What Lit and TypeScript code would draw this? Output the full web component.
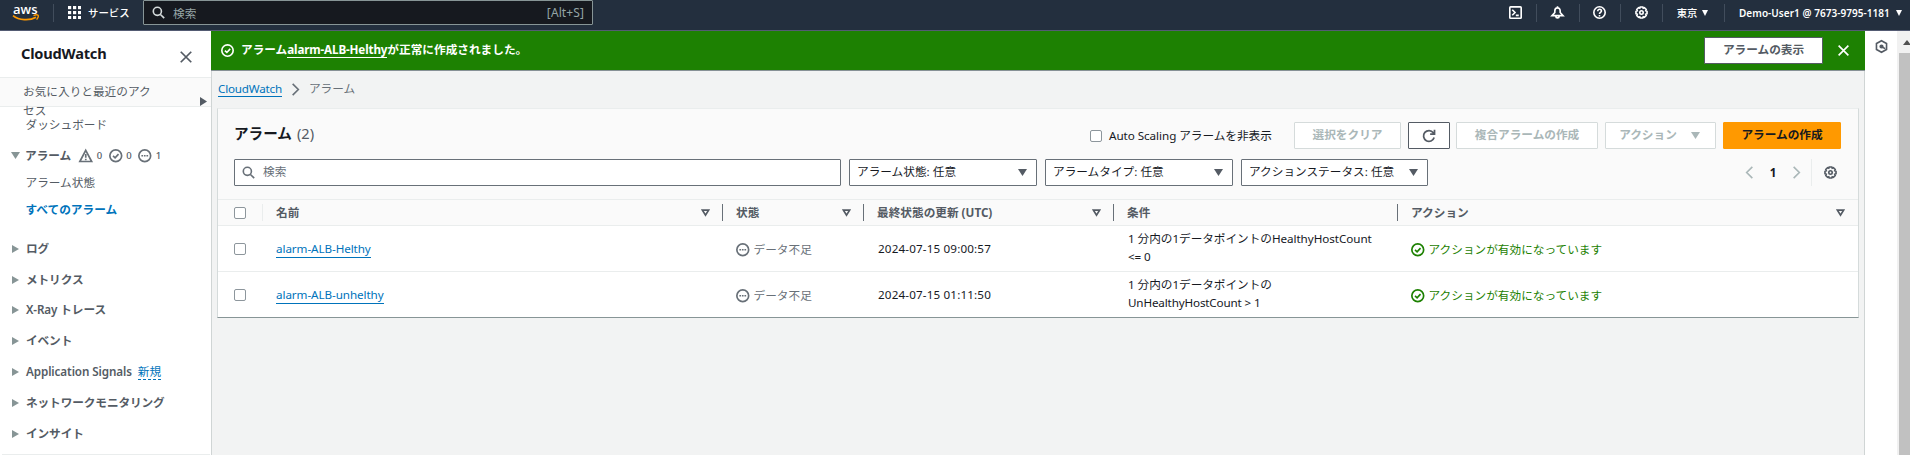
import { LitElement, html, css, svg, nothing } from "lit";
import { customElement, property } from "lit/decorators.js";

const ICONS: Record<string, unknown> = {
  search: svg`<circle cx="6.6" cy="6.6" r="5" /><path d="M10.4 10.4 15 15" />`,
  close: svg`<path d="M2 2 14 14M14 2 2 14" />`,
  check: svg`<circle cx="8" cy="8" r="7" /><path d="M4.8 8.2 7.2 10.4 11.3 6" />`,
  dots: svg`<circle cx="8" cy="8" r="7" /><path d="M4 8h2M7 8h2M10 8h2" />`,
  warn: svg`<path d="M8 1.6 15 14.8H1Z" /><path d="M8 6v4.4M8 11.6v1.8" />`,
  terminal: svg`<rect x="1" y="1" width="14" height="14" rx="1" /><path d="M4 4.6 7.4 8 4 11.4M8.4 11.6H12" />`,
  bell: svg`<path d="M8 .3v2M8 2.300C5.800 2.300 4.700 4 4.700 6V8L1.200 11.800H14.800L11.300 8V6C11.300 4 10.200 2.300 8 2.300ZM5.800 12.400c.3 3 4.100 3 4.400 0" />`,
  help: svg`<circle cx="8" cy="8" r="7" /><path d="M5.800 6.400c0-3.200 4.600-3 4.600-.2C10.400 8 8 7.800 8 9.800M8 11v1.800" />`,
  gear: svg`<path d="M6.400 1.200h3.200l.5 1.500 1.500-.6 2.200 2.200-.6 1.500 1.600.600v3.200l-1.600.600.600 1.500-2.200 2.200-1.500-.600-.5 1.500H6.400l-.5-1.500-1.500.600-2.200-2.200.600-1.500L1.200 9.600V6.400l1.600-.600-.600-1.500 2.200-2.200 1.500.600Z" /><circle cx="8" cy="8" r="2.100" />`,
  refresh: svg`<path d="M13.900 9.800A6.200 6.200 0 1 1 12.900 4.200L14.200 5.800M14.300 .8v5H9.300" />`,
  left: svg`<path d="M11.500 1 4.500 8l7 7" />`,
  right: svg`<path d="M4.500 1l7 7-7 7" />`,
  hexagon: svg`<path d="M8 .9 14.200 4.400v7.200L8 15.100 1.800 11.600V4.400Z" /><circle cx="8" cy="8" r="1.600" fill="currentColor" /><path d="M8.500 8.500 12.600 10.600" />`,
};

@customElement("ui-icon")
export class UiIcon extends LitElement {
  @property() name = "";
  @property({ type: Number }) size = 13;
  @property({ type: Number }) stroke = 2;
  static styles = css`
    :host { display: inline-flex; flex: none; }
    svg { display: block; fill: none; stroke: currentColor; overflow: visible; }
  `;
  render() {
    return html`<svg width=${this.size} height=${this.size} viewBox="0 0 16 16" stroke-width=${this.stroke}>${ICONS[this.name]}</svg>`;
  }
}

@customElement("ui-caret")
export class UiCaret extends LitElement {
  @property() dir = "down";
  @property({ type: Number }) w = 9;
  @property({ type: Number }) h = 7;
  static styles = css`
    :host { display: inline-flex; flex: none; }
    svg { display: block; }
    .solid { fill: currentColor; }
  `;
  render() {
    const d = this.dir === "right" ? "M0 0 100 50 0 100Z" : this.dir === "up" ? "M0 100 50 0 100 100Z" : "M0 0H100L50 100Z";
    return this.dir === "sort"
      ? html`<svg width="9" height="8" viewBox="0 0 9 8"><path d="M1.400 1.200H7.600L4.500 6.200Z" fill="none" stroke="currentColor" stroke-width="1.700" /></svg>`
      : html`<svg class="solid" width=${this.w} height=${this.h} viewBox="0 0 100 100" preserveAspectRatio="none"><path d=${d} /></svg>`;
  }
}

const base = css`
  * { box-sizing: border-box; }
`;

@customElement("top-nav")
export class TopNav extends LitElement {
  static styles = [base, css`
    :host { display: flex; height: 31px; background: #232f3e; border-bottom: 1px solid #545b73; color: #fff; font-size: 11px; }
    .brand { width: 30px; height: 26px; margin-left: 12px; }
    .word { display: block; height: 18px; font: 600 13px/18px "Open Sans", sans-serif; padding-left: 1px; }
    .smile { display: block; margin-top: -4px; }
    .rule { width: 1px; height: 18px; margin-top: 4px; background: #414d5c; flex: none; }
    .brand + .rule { margin-left: 11px; }
    .services { display: flex; align-items: center; height: 25px; margin-left: 14px; gap: 7px; font-size: 10.400px; font-weight: 500; width: 75px; white-space: nowrap; }
    .search { display: flex; align-items: center; width: 450px; height: 25px; background: #16191f; border: 1px solid #879596; border-radius: 1px; color: #95a5a6; font-size: 11.700px; padding: 0 8px; gap: 8px; }
    .search ui-icon { color: #d5dbdb; }
    .hint { margin-left: auto; font-size: 12px; letter-spacing: 0.1px; }
    .right { display: flex; margin-left: auto; height: 25px; }
    .cell { display: flex; align-items: center; justify-content: center; height: 25px; }
    .c0 { width: 41px; } .c1 { width: 42px; padding-right: 2px; } .c2 { width: 40px; padding-right: 1px; } .c3 { width: 41px; }
    .region { width: 61px; gap: 5px; font-size: 10.300px; font-weight: 500; padding-right: 2px; }
    .user { width: 185px; gap: 6px; font-size: 10px; font-weight: 600; justify-content: flex-start; padding-left: 14px; white-space: nowrap; letter-spacing: 0.04px; }
  `];
  render() {
    return html`
      <div class="brand">
        <span class="word">aws</span>
        <svg class="smile" width="28" height="8" viewBox="0 0 28 8">
          <path d="M1 1.600C7 6.400 17.500 7 24 3.200" fill="none" stroke="#ff9900" stroke-width="1.700" />
          <path d="M21.500 1.600c2-.9 4-.8 4.600-.3.500.9-.3 3-1.500 4.300" fill="none" stroke="#ff9900" stroke-width="1.400" />
        </svg>
      </div>
      <div class="rule"></div>
      <div class="services">
        <svg width="13" height="13" viewBox="0 0 13 13" fill="#fff">${[0, 5, 10].map((y) => [0, 5, 10].map((x) => svg`<rect x=${x} y=${y} width="3.200" height="3.200" />`))}</svg>
        <span>サービス</span>
      </div>
      <div class="search"><ui-icon name="search" size="13"></ui-icon><span>検索</span><span class="hint">[Alt+S]</span></div>
      <div class="right">
        <div class="cell c0"><ui-icon name="terminal"></ui-icon></div><div class="rule"></div>
        <div class="cell c1"><ui-icon name="bell"></ui-icon></div><div class="rule"></div>
        <div class="cell c2"><ui-icon name="help"></ui-icon></div><div class="rule"></div>
        <div class="cell c3"><ui-icon name="gear"></ui-icon></div><div class="rule"></div>
        <div class="cell region"><span>東京</span><ui-caret w="6" h="6"></ui-caret></div><div class="rule"></div>
        <div class="cell user"><span>Demo-User1 @ 7673-9795-1181</span><ui-caret w="6" h="6"></ui-caret></div>
      </div>`;
  }
}

@customElement("side-nav")
export class SideNav extends LitElement {
  static styles = [base, css`
    :host { display: block; width: 212px; background: #fff; border-right: 1px solid #d0d5d5; color: #545b64; }
    .head { display: flex; justify-content: space-between; height: 46px; padding: 10px 18px 0 21px; }
    .title { font-size: 14.600px; font-weight: 700; color: #16191f; line-height: 24px; letter-spacing: -0.2px; }
    .head ui-icon { margin-top: 9px; }
    .recent { display: flex; justify-content: space-between; height: 30px; background: #fafafa; border: solid #eaeded; border-width: 1px 0; padding: 4px 4px 0 23px; line-height: 19px; }
    .recent span { width: 134px; }
    .recent ui-caret { margin-top: 15px; }
    .row { display: flex; align-items: center; height: 27px; padding-left: 25.500px; white-space: nowrap; }
    .first { margin-top: 4px; }
    .group { padding-left: 10.500px; font-weight: 600; }
    .group ui-caret { color: #879596; width: 14.500px; }
    .alarms { margin-top: 4px; }
    .n { font-size: 9.500px; font-weight: 500; margin-left: 4px; width: 12px; }
    .alarms ui-icon { color: #687078; }
    .alarms ui-icon:first-of-type { margin-left: 8px; }
    .on { color: #0073bb; font-weight: 700; }
    .groups { margin-top: 10.500px; display: grid; grid-auto-rows: 30.800px; padding-bottom: 4.500px; border-bottom: 1px solid #eaeded; margin-inline: 2px 1px; }
    .groups .group { height: 30.800px; padding-left: 9.500px; }
    .lat { letter-spacing: -0.1px; }
    .new { color: #0073bb; font-weight: 400; border-bottom: 1px dashed #0073bb; margin-left: 6px; line-height: 15px; }
  `];
  render() {
    const groups = ["ログ", "メトリクス", "X-Ray トレース", "イベント", "Application Signals", "ネットワークモニタリング", "インサイト"];
    return html`
      <div class="head"><span class="title">CloudWatch</span><ui-icon name="close" size="14"></ui-icon></div>
      <div class="recent"><span>お気に入りと最近のアクセス</span><ui-caret dir="right" w="7" h="9"></ui-caret></div>
      <div class="row first">ダッシュボード</div>
      <div class="row group alarms"><ui-caret></ui-caret>アラーム
        <ui-icon name="warn" size="13.500"></ui-icon><span class="n">0</span>
        <ui-icon name="check" size="13.500"></ui-icon><span class="n">0</span>
        <ui-icon name="dots" size="13.500"></ui-icon><span class="n">1</span>
      </div>
      <div class="row">アラーム状態</div>
      <div class="row on">すべてのアラーム</div>
      <div class="groups">${groups.map((g) => html`<div class="row group"><ui-caret dir="right" w="7" h="8"></ui-caret><span class="lat">${g}</span>${g.startsWith("App") ? html`<span class="new">新規</span>` : nothing}</div>`)}</div>`;
  }
}

interface Alarm { name: string; updated: string; cond: [string, string]; }
const ALARMS: Alarm[] = [
  { name: "alarm-ALB-Helthy", updated: "2024-07-15 09:00:57", cond: ["1 分内の1データポイントのHealthyHostCount", "<= 0"] },
  { name: "alarm-ALB-unhelthy", updated: "2024-07-15 01:11:50", cond: ["1 分内の1データポイントの", "UnHealthyHostCount > 1"] },
];

@customElement("alarm-table")
export class AlarmTable extends LitElement {
  static styles = [base, css`
    :host { display: block; width: 1642px; height: 210px; margin-left: 5px; background: #fff; border: 1px solid #d5dbdb; border-top-color: #eaeded; border-bottom: 1px solid #879596; color: #16191f; }
    .top { background: #fafafa; height: 90px; padding: 13px 17px 0 16px; }
    .actions { display: flex; align-items: center; height: 27px; }
    h2 { margin: 0 auto 0 0; font-size: 14.600px; line-height: 24px; padding-bottom: 5px; }
    .count { font-weight: 400; color: #545b64; margin-left: 5px; }
    .box { display: block; width: 12px; height: 12px; border: 1px solid #8d969c; border-radius: 2px; background: #fff; flex: none; }
    .hide { display: flex; align-items: center; gap: 7px; margin-right: 22px; width: 182px; white-space: nowrap; letter-spacing: -0.05px; }
    .btn { display: flex; align-items: center; justify-content: center; height: 27px; border: 1px solid #d5dbdb; border-radius: 1px; background: #fff; color: #aab7b8; font-weight: 700; margin-left: 7px; white-space: nowrap; padding-bottom: 1px; }
    .clear { width: 107px; margin-left: 0; }
    .refresh { width: 42px; border-color: #545b64; color: #545b64; padding: 0; }
    .comp { width: 142px; margin-left: 6px; }
    .act { width: 111px; gap: 14px; padding-right: 2px; }
    .create { width: 118px; background: #ff9900; border-color: #ff9900; color: #16191f; }
    .filters { display: flex; margin-top: 10px; height: 27px; align-items: stretch; }
    .field { display: flex; align-items: center; background: #fff; border: 1px solid #687078; border-radius: 1px; margin-right: 8px; padding: 0 9px 1px 7px; justify-content: space-between; white-space: nowrap; }
    .field ui-caret { color: #545b64; margin-top: 1px; }
    .s { width: 607px; justify-content: flex-start; gap: 8px; color: #687078; }
    .s ui-icon { margin-top: 1px; }
    .f { width: 188px; } .f3 { width: 187px; margin: 0; }
    .pager { display: flex; align-items: center; margin-left: auto; color: #aab7b8; }
    .page { width: 34px; text-align: center; color: #16191f; font-weight: 700; }
    .pager i { width: 1px; height: 27px; background: #eaeded; margin: 0 12px 0 8px; }
    .gear { color: #545b64; margin-right: 4px; }
    .grid { display: grid; grid-template-columns: 45px 460px 141px 250px 284px 1fr; }
    .th { display: flex; align-items: center; height: 27px; background: #fafafa; border: solid #eaeded; border-width: 1px 0; color: #545b64; font-weight: 700; }
    .th span { flex: 1; padding-left: 13px; }
    .th i { width: 1px; height: 17px; background: #687078; margin-left: 12px; }
    .th i.soft { background: #eaeded; margin-left: auto; }
    .th .box, .td .box { margin-left: 16px; }
    .th ui-caret { margin-top: 1px; }
    .last ui-caret { margin-right: 13px; }
    .td { display: flex; align-items: center; height: 45px; padding: 2px 0 0 13px; line-height: 18px; white-space: nowrap; }
    .td.pick { padding: 1px 0 0 0; }
    .line { border-bottom: 1px solid #eaeded; height: 46px; }
    .link { color: #0073bb; border-bottom: 1px solid #0073bb; line-height: 16px; letter-spacing: -0.08px; }
    .td.time { letter-spacing: 0.15px; padding-left: 14px; padding-top: 1px; }
    .td.cond { padding-left: 14px; padding-top: 0; padding-bottom: 1px; }
    .st { gap: 4px; color: #687078; } .ok { gap: 4px; color: #1d8102; }
    .one { letter-spacing: -0.05px; } .two { letter-spacing: -0.15px; }
  `];
  render() {
    const sort = html`<ui-caret dir="sort"></ui-caret>`;
    return html`
      <div class="top">
        <div class="actions">
          <h2>アラーム<span class="count">(2)</span></h2>
          <label class="hide"><span class="box"></span><span>Auto Scaling アラームを非表示</span></label>
          <div class="btn clear">選択をクリア</div>
          <div class="btn refresh"><ui-icon name="refresh" size="14"></ui-icon></div>
          <div class="btn comp">複合アラームの作成</div>
          <div class="btn act">アクション<ui-caret></ui-caret></div>
          <div class="btn create">アラームの作成</div>
        </div>
        <div class="filters">
          <div class="field s"><ui-icon name="search"></ui-icon><span>検索</span></div>
          <div class="field f"><span>アラーム状態: 任意</span><ui-caret></ui-caret></div>
          <div class="field f"><span>アラームタイプ: 任意</span><ui-caret></ui-caret></div>
          <div class="field f3"><span>アクションステータス: 任意</span><ui-caret></ui-caret></div>
          <div class="pager"><ui-icon name="left"></ui-icon><span class="page">1</span><ui-icon name="right"></ui-icon><i></i><ui-icon class="gear" name="gear"></ui-icon></div>
        </div>
      </div>
      <div class="grid">
        <div class="th"><div class="box"></div><i class="soft"></i></div>
        <div class="th"><span>名前</span>${sort}<i></i></div>
        <div class="th"><span>状態</span>${sort}<i></i></div>
        <div class="th"><span>最終状態の更新 (UTC)</span>${sort}<i></i></div>
        <div class="th"><span>条件</span><i></i></div>
        <div class="th last"><span>アクション</span>${sort}</div>
        ${ALARMS.map((a, n) => {
          const line = n === 0 ? "line" : "";
          return html`
            <div class="td pick ${line}"><div class="box"></div></div>
            <div class="td ${line}"><span class="link">${a.name}</span></div>
            <div class="td st ${line}"><ui-icon name="dots" size="13.500"></ui-icon>データ不足</div>
            <div class="td time ${line}">${a.updated}</div>
            <div class="td cond ${line}"><div><span class="one">${a.cond[0]}</span><br /><span class="two">${a.cond[1]}</span></div></div>
            <div class="td ok ${line}"><ui-icon name="check" size="13.500"></ui-icon>アクションが有効になっています</div>`;
        })}
      </div>`;
  }
}

@customElement("app-root")
export class AppRoot extends LitElement {
  static styles = [base, css`
    :host { display: flex; flex-direction: column; width: 1910px; height: 455px; overflow: hidden; background: #f2f3f3; font-family: "Noto Sans", "Noto Sans CJK JP", sans-serif; font-size: 11.670px; line-height: 16px; color: #16191f; }
    .body { display: flex; flex: 1; min-height: 0; }
    main { flex: 1; min-width: 0; border-right: 1px solid #d0d5d5; }
    .flash { display: flex; align-items: center; height: 40px; margin: 0 -1px 0 -1px; background: #1d8102; border-bottom: 1px solid #879196; color: #fff; padding: 0 15px 1px 10px; font-weight: 700; }
    .msg { margin-left: 7px; white-space: nowrap; }
    .msg u { text-decoration: none; border-bottom: 1px solid #fff; letter-spacing: -0.15px; }
    .view { display: flex; align-items: center; justify-content: center; width: 119px; height: 27px; background: #fff; border: 1px solid #545b64; border-radius: 1px; color: #545b64; margin: 0 14px 0 auto; }
    .crumbs { display: flex; align-items: center; height: 37px; padding: 0 0 1px 6px; color: #687078; }
    .crumbs a { color: #0073bb; border-bottom: 1px solid #0073bb; line-height: 15px; letter-spacing: -0.2px; }
    .crumbs ui-icon { margin: 1px 7px 0 7px; }
    .rail { width: 32px; background: #fff; color: #545b64; padding: 9px 0 0 10px; }
    .scroll { width: 13px; background: #f1f1f1; padding-left: 2px; }
    .up { display: flex; height: 22px; padding: 9px 0 0 4px; color: #505050; }
    .thumb { height: 402px; background: #c1c1c1; }
  `];
  render() {
    return html`
      <top-nav></top-nav>
      <div class="body">
        <side-nav></side-nav>
        <main>
          <div class="flash">
            <ui-icon name="check" size="13"></ui-icon>
            <span class="msg">アラーム<u>alarm-ALB-Helthy</u>が正常に作成されました。</span>
            <div class="view">アラームの表示</div>
            <ui-icon name="close" size="13"></ui-icon>
          </div>
          <div class="crumbs"><a>CloudWatch</a><ui-icon name="right" size="13"></ui-icon><span>アラーム</span></div>
          <alarm-table></alarm-table>
        </main>
        <div class="rail"><ui-icon name="hexagon" size="13"></ui-icon></div>
        <div class="scroll"><div class="up"><ui-caret dir="up" w="8" h="5"></ui-caret></div><div class="thumb"></div></div>
      </div>`;
  }
}
